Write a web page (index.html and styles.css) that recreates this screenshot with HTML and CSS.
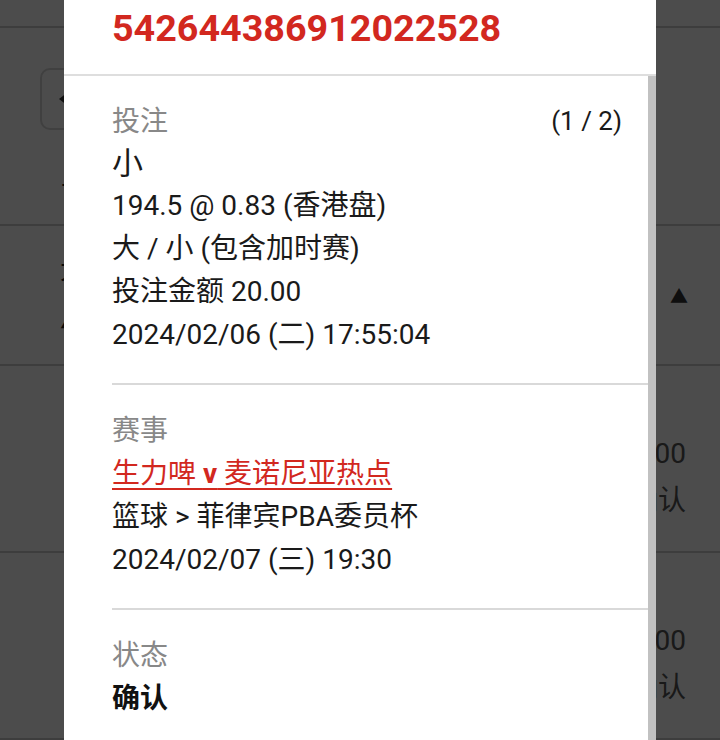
FILE: index.html
```html
<!DOCTYPE html>
<html lang="zh-CN">

<head>
    <meta charset="UTF-8">
    <meta name="viewport" content="width=device-width, initial-scale=1.0">
    <title>投注详情</title>
    <link rel="stylesheet" href="styles.css">
</head>

<body>
    <!-- page behind the dialog -->
    <div class="page">
        <div class="topbar"></div>
        <div class="toolbar">
            <div class="back-btn"><span class="back-arrow"></span></div>
            <div class="toolbar-text">下注记录</div>
        </div>
        <div class="group-head">
            <div class="group-text">
                <div>大 / 小</div>
                <div>▲ 篮球</div>
            </div>
            <span class="caret">▲</span>
        </div>
        <div class="bet-row">
            <span>20.00</span>
            <span>确认</span>
        </div>
        <div class="bet-row">
            <span>20.00</span>
            <span>确认</span>
        </div>
    </div>

    <div class="overlay"></div>

    <div class="modal">
        <div class="modal-head">
            <span class="bet-id">542644386912022528</span>
        </div>
        <div class="modal-body">
            <div class="modal-scroll">
                <section class="detail">
                    <div class="detail-top">
                        <span class="label">投注</span>
                        <span class="pager">(1 / 2)</span>
                    </div>
                    <div class="pick">小</div>
                    <div>194.5 @ 0.83 (香港盘)</div>
                    <div>大 / 小 (包含加时赛)</div>
                    <div>投注金额 20.00</div>
                    <div>2024/02/06 (二) 17:55:04</div>
                </section>

                <section class="detail">
                    <div class="label">赛事</div>
                    <div><a class="match-link" href="#">生力啤 <b>v</b> 麦诺尼亚热点</a></div>
                    <div>篮球 &gt; 菲律宾PBA委员杯</div>
                    <div>2024/02/07 (三) 19:30</div>
                </section>

                <section class="detail">
                    <div class="label">状态</div>
                    <div class="status">确认</div>
                </section>
            </div>
            <div class="scrollbar"></div>
        </div>
    </div>
</body>

</html>
```

FILE: styles.css
```css
* {
    box-sizing: border-box;
}

html,
body {
    margin: 0;
    height: 100%;
    overflow: hidden;
}

body {
    font-family: Roboto, "Noto Sans CJK SC", sans-serif;
    color: #222;
    background: #fff;
}

/* page under the dialog */
.page {
    height: 100%;
}

.topbar {
    height: 28px;
    border-bottom: 2px solid #ccc;
}

.toolbar {
    height: 198px;
    padding: 40px 0 0 40px;
    border-bottom: 2px solid #ccc;
}

.back-btn {
    width: 90px;
    height: 62px;
    border: 2px solid #d6d6d6;
    border-radius: 10px;
    display: flex;
    align-items: center;
    padding-left: 17px;
}

.back-arrow {
    width: 0;
    height: 0;
    border-top: 7px solid transparent;
    border-bottom: 7px solid transparent;
    border-right: 9px solid #333;
}

.toolbar-text {
    margin-top: 45px;
    padding-left: 21px;
    font-size: 26px;
    line-height: 40px;
}

.group-head {
    height: 140px;
    display: flex;
    align-items: center;
    justify-content: space-between;
    padding: 0 32px 0 60px;
    border-bottom: 2px solid #ccc;
    font-size: 26px;
}

.group-text {
    line-height: 50px;
}

.caret {
    font-size: 18px;
    color: #333;
}

.bet-row {
    height: 187px;
    display: flex;
    flex-direction: column;
    align-items: flex-end;
    padding: 64px 34px 0 0;
    border-bottom: 2px solid #ccc;
    font-size: 28px;
    line-height: 47px;
    color: #555;
}

.overlay {
    position: fixed;
    inset: 0;
    background: rgba(0, 0, 0, 0.7);
}

/* dialog */
.modal {
    position: fixed;
    top: 0;
    bottom: 0;
    left: 64px;
    width: 592px;
    background: #fff;
    display: flex;
    flex-direction: column;
}

.modal-head {
    height: 76px;
    padding: 6px 0 0 48px;
    border-bottom: 2px solid #dedede;
}

.bet-id {
    font-size: 37.7px;
    font-weight: 700;
    color: #d2281f;
}

.modal-body {
    flex: 1;
    display: flex;
    overflow: hidden;
}

.modal-scroll {
    flex: 1;
    padding-left: 48px;
}

.scrollbar {
    width: 8px;
    background: #c1c1c1;
}

.detail {
    padding: 24px 26px 27px 0;
    border-bottom: 2px solid #d9d9d9;
    font-size: 28px;
    line-height: 43px;
    color: #1a1a1a;
}

.detail-top {
    display: flex;
    justify-content: space-between;
    align-items: center;
}

.label {
    color: #888;
    font-size: 28px;
}

.pager {
    font-size: 26px;
}

.pick {
    font-size: 31px;
    line-height: 41px;
}

.match-link {
    color: #d2281f;
    text-decoration: underline;
    text-decoration-thickness: 2px;
    text-underline-offset: 5px;
}

.status {
    font-weight: 700;
    color: #111;
}
```
